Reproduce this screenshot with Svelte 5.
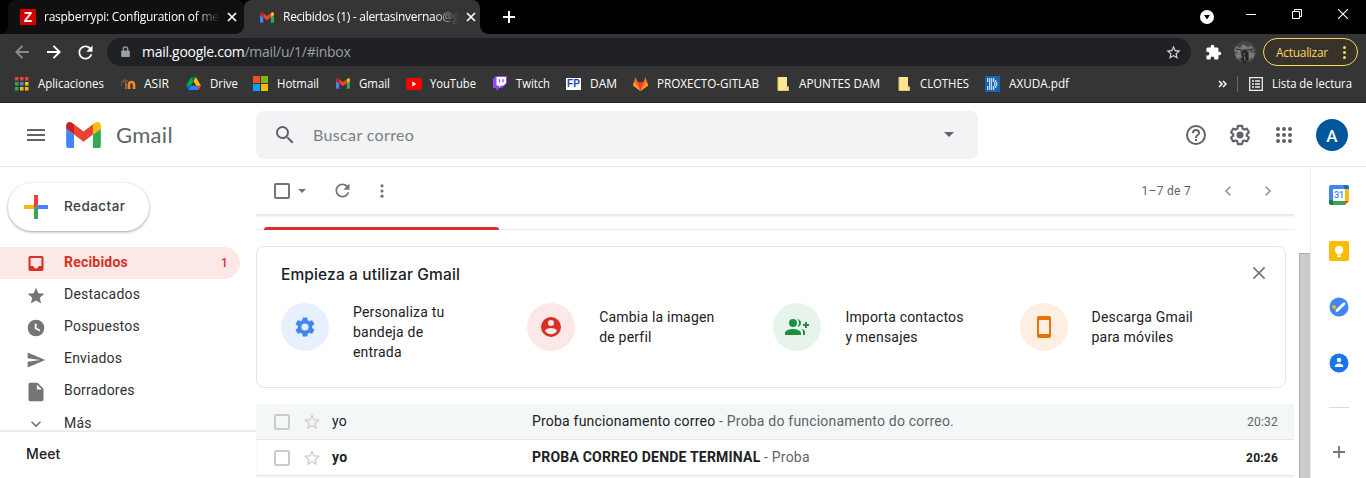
<script>
  const bookmarks = [
    { icon: 'apps', label: 'Aplicaciones', width: 106, text: 66 },
    { icon: 'moodle', label: 'ASIR', width: 66, text: 25 },
    { icon: 'drive', label: 'Drive', width: 67, text: 28 },
    { icon: 'ms', label: 'Hotmail', width: 82, text: 42 },
    { icon: 'gmail', label: 'Gmail', width: 71, text: 31 },
    { icon: 'youtube', label: 'YouTube', width: 86, text: 46 },
    { icon: 'twitch', label: 'Twitch', width: 74, text: 34 },
    { icon: 'fp', label: 'DAM', width: 67, text: 27 },
    { icon: 'gitlab', label: 'PROXECTO-GITLAB', width: 142, text: 102 },
    { icon: 'folder', label: 'APUNTES DAM', width: 121, text: 81 },
    { icon: 'folder', label: 'CLOTHES', width: 89, text: 49 },
    { icon: 'pdf', label: 'AXUDA.pdf', width: 110, text: 60 }
  ];
  const folders = [
    { label: 'Recibidos', count: '1', icon: 'M19 3H5c-1.1 0-2 .9-2 2v14c0 1.1.9 2 2 2h14c1.1 0 2-.9 2-2V5c0-1.1-.9-2-2-2zm-.5 12H15c0 1.660-1.350 3-3 3s-3-1.340-3-3H5.500V5.500h13v9.500z' },
    { label: 'Destacados', icon: 'M12 17.27L18.18 21l-1.64-7.03L22 9.24l-7.19-.61L12 2 9.19 8.63 2 9.24l5.46 4.73L5.82 21z' },
    { label: 'Pospuestos', icon: 'M12 2a10 10 0 1 0 0 20 10 10 0 0 0 0-20zm4.2 14.2L10.500 13V7h2.200v4.800l4.500 2.700z' },
    { label: 'Enviados', icon: 'M2 21l21-9L2 3v7l15 2-15 2z' },
    { label: 'Borradores', icon: 'M14 1H5c-1.1 0-2 .9-2 2v18c0 1.1.9 2 2 2h14c1.1 0 2-.9 2-2V8l-7-7zm-1 8V3l6 6z' }
  ];
  const gear = 'M19.14 12.94c.04-.3.06-.61.06-.94 0-.32-.02-.64-.07-.94l2.03-1.58c.18-.14.23-.41.12-.61l-1.92-3.32c-.12-.22-.37-.29-.59-.22l-2.39.96c-.5-.38-1.03-.7-1.62-.94l-.36-2.54c-.04-.24-.24-.41-.48-.41h-3.84c-.24 0-.43.17-.47.41l-.36 2.54c-.59.24-1.13.57-1.62.94l-2.39-.96c-.22-.08-.47 0-.59.22L2.74 8.87c-.12.21-.08.47.12.61l2.03 1.58c-.05.3-.09.63-.09.94s.02.64.07.94l-2.03 1.58c-.18.14-.23.41-.12.61l1.92 3.32c.12.22.37.29.59.22l2.39-.96c.5.38 1.03.7 1.62.94l.36 2.54c.05.24.24.41.48.41h3.84c.24 0 .44-.17.47-.41l.36-2.54c.59-.24 1.13-.56 1.62-.94l2.39.96c.22.08.47 0 .59-.22l1.92-3.32c.12-.22.07-.47-.12-.61z';
  const tips = [
    { color: '#4285f4', bg: '#e8f0fe', lines: ['Personaliza tu', 'bandeja de', 'entrada'], icon: gear + 'M12 8.4a3.6 3.6 0 1 0 0 7.2 3.6 3.6 0 0 0 0-7.2z' },
    { color: '#d93025', bg: '#fce8e6', lines: ['Cambia la imagen', 'de perfil'], icon: 'M12 2a10 10 0 1 0 0 20 10 10 0 0 0 0-20zm0 3a3 3 0 1 1 0 6 3 3 0 0 1 0-6zm0 14.2c-2.500 0-4.710-1.280-6-3.220.03-1.990 4-3.080 6-3.080s5.970 1.090 6 3.080c-1.290 1.940-3.500 3.220-6 3.220z' },
    { color: '#1e8e3e', bg: '#e6f4ea', lines: ['Importa contactos', 'y mensajes'], icon: 'M8 4a4 4 0 1 0 0 8 4 4 0 0 0 0-8zM0 20v-2c0-2.660 5.330-4 8-4s8 1.340 8 4v2zM12.500 4.050C13.430 5.110 14 6.490 14 8s-.57 2.890-1.500 3.950c2-.24 3.500-1.900 3.500-3.950s-1.500-3.710-3.500-3.950zM16.530 13.830C17.420 14.660 18 15.700 18 17v3h2v-3c0-1.450-1.590-2.510-3.470-3.170zM20 7h2v2h2v2h-2v2h-2v-2h-2V9h2z' },
    { color: '#e8710a', bg: '#feefe3', lines: ['Descarga Gmail', 'para móviles'], icon: 'M17 1H7c-1.100 0-2 .9-2 2v18c0 1.100.9 2 2 2h10c1.100 0 2-.9 2-2V3c0-1.100-.9-2-2-2zm0 18H7V5h10v14z' }
  ];
  const mails = [
    { from: 'yo', subject: 'Proba funcionamento correo', body: 'Proba do funcionamento do correo.', time: '20:32', read: true },
    { from: 'yo', subject: 'PROBA CORREO DENDE TERMINAL', body: 'Proba', time: '20:26', read: false }
  ];
  const appColors = ['#ea4335', '#ea4335', '#ea4335', '#34a853', '#4285f4', '#fbbc04', '#34a853', '#fbbc04', '#fbbc04'];
  const starPath = 'M22 9.24l-7.190-.62L12 2 9.190 8.630 2 9.240l5.460 4.730L5.820 21 12 17.270 18.180 21l-1.630-7.030L22 9.240zM12 15.400l-3.760 2.270 1-4.280-3.320-2.880 4.380-.38L12 6.100l1.710 4.040 4.380.38-3.320 2.880 1 4.280L12 15.400z';
  const refreshPath = 'M17.650 6.350C16.200 4.900 14.210 4 12 4c-4.420 0-7.990 3.580-7.990 8s3.570 8 7.990 8c3.730 0 6.840-2.550 7.730-6h-2.080c-.82 2.330-3.040 4-5.650 4-3.310 0-6-2.690-6-6s2.690-6 6-6c1.660 0 3.140.69 4.220 1.780L13 11h7V4l-2.350 2.350z';
</script>

{#snippet ico(d, size, color)}
  <svg width={size} height={size} viewBox="0 0 24 24" fill={color}><path {d} fill-rule="evenodd" /></svg>
{/snippet}

{#snippet gmail(w, h)}
  <svg width={w} height={h} viewBox="52 42 88 66">
    <path fill="#4285f4" d="M58 108h14V74L52 59v43c0 3.320 2.690 6 6 6" />
    <path fill="#34a853" d="M120 108h14c3.320 0 6-2.690 6-6V59l-20 15" />
    <path fill="#fbbc04" d="M120 48v26l20-15v-8c0-7.420-8.470-11.650-14.400-7.200" />
    <path fill="#ea4335" d="M72 74V48l24 18 24-18v26L96 92" />
    <path fill="#c5221f" d="M52 51v8l20 15V48l-5.600-4.200c-5.940-4.450-14.400-.22-14.400 7.200" />
  </svg>
{/snippet}

{#snippet cross(size, color, w)}
  <svg width={size} height={size} viewBox="0 0 10 10" fill="none" stroke={color} stroke-width={w}><path d="M1 1l8 8M9 1l-8 8" /></svg>
{/snippet}

<div class="page">
  <div class="tabs">
    <div class="tab first">
      <span class="zicon">Z</span>
      <span class="title t1">raspberrypi: Configuration of med</span>
      {@render cross(10, '#fff', 1.7)}
    </div>
    <div class="tab active">
      <span class="gicon">{@render gmail(14, 11)}</span>
      <span class="title t2">Recibidos (1) - alertasinvernao@g</span>
      {@render cross(10, '#fff', 1.7)}
    </div>
    <svg class="newtab" width="12" height="12" viewBox="0 0 12 12" stroke="#fff" stroke-width="2"><path d="M6 0v12M0 6h12" /></svg>
    <div class="window">
      <svg width="14" height="14" viewBox="0 0 14 14"><circle cx="7" cy="7" r="7" fill="#fff" /><path d="M4 5h6L7 9.500z" fill="#000" /></svg>
      <svg width="10" height="10" viewBox="0 0 10 10"><path d="M0 5.500h10" stroke="#fff" /></svg>
      <svg width="10" height="10" viewBox="0 0 10 10" fill="none" stroke="#fff"><path d="M.5 2.500h7v7h-7zM2.500 2.500v-2h7v7h-2" /></svg>
      <svg width="10" height="10" viewBox="0 0 10 10" stroke="#fff" stroke-width="1.100"><path d="M0 0l10 10M10 0L0 10" /></svg>
    </div>
  </div>

  <div class="navbar">
    <svg class="back" width="14" height="14" viewBox="0 0 14 14" fill="none" stroke="#8b8b8b" stroke-width="1.900"><path d="M14 7H1.500M7.500 .8L1.300 7l6.200 6.200" /></svg>
    <svg class="fwd" width="14" height="14" viewBox="0 0 14 14" fill="none" stroke="#fff" stroke-width="1.900"><path d="M0 7h12.500M6.500 .8L12.700 7l-6.200 6.200" /></svg>
    <span class="reload">{@render ico(refreshPath, 21, '#fff')}</span>
    <div class="url">
      <svg width="9" height="12" viewBox="0 0 9 12"><path d="M1 4.500h7q.8 0 .8.800v5q0 .8-.8.800H1q-.8 0-.8-.8v-5q0-.8.8-.8z" fill="#9aa0a6" /><path d="M2.300 5V3a2.200 2.200 0 0 1 4.400 0v2" fill="none" stroke="#9aa0a6" stroke-width="1.200" /></svg>
      <span class="addr"><b>mail.google.com</b>/mail/u/1/#inbox</span>
      {@render ico(starPath, 17, '#d5d7da')}
    </div>
    <span class="ext">{@render ico('M20.500 11H19V7c0-1.100-.9-2-2-2h-4V3.500a2.500 2.500 0 0 0-5 0V5H4c-1.100 0-2 .9-2 2v3.800h1.500a2.700 2.700 0 0 1 0 5.400H2V20c0 1.100.9 2 2 2h3.800v-1.500a2.700 2.700 0 0 1 5.400 0V22H17c1.100 0 2-.9 2-2v-4h1.500a2.500 2.500 0 0 0 0-5z', 17, '#fff')}</span>
    <svg class="photo" width="22" height="22" viewBox="0 0 22 22">
      <circle cx="11" cy="11" r="11" fill="#474747" />
      <path d="M2 5l4 2 3-4 4 3 5-1 2 5-4-1-3 2-5-2-4 3-4-2zM1 13l5-2 1 6-4 1zM16 11l5 1-2 6-4-2z" fill="#777" />
      <path d="M8 10l3-2 3 3v8l-2 3H9l-2-5z" fill="#262626" /><path d="M10 12l1 8M5 9l3 8M15 8l1 11M9 5l4 2" stroke="#8a8a8a" fill="none" stroke-width=".8" /><path d="M2 8l6 1M12 9l7-1M8 14l6 2" stroke="#292929" />
    </svg>
    <div class="update"><span>Actualizar</span><svg width="3" height="13" viewBox="0 0 3 13" fill="#fdd663"><circle cx="1.500" cy="1.600" r="1.500" /><circle cx="1.500" cy="6.500" r="1.500" /><circle cx="1.500" cy="11.400" r="1.500" /></svg></div>
  </div>

  <div class="bookmarks">
    {#each bookmarks as b}
      <div class="bm" style="width: {b.width}px">
        <span class="bicon">
          {#if b.icon === 'apps'}
            <svg width="14" height="14" viewBox="0 0 14 14">{#each appColors as c, i}<rect x={(i % 3) * 5} y={Math.floor(i / 3) * 5} width="3.500" height="3.500" fill={c} />{/each}</svg>
          {:else if b.icon === 'moodle'}
            <svg width="16" height="12" viewBox="0 0 16 12" fill="none"><path d="M9 11V6.500q0-2.500 2.500-2.500T14 6.500V11" stroke="#f08a2c" stroke-width="2.600" /><path d="M6 11V5" stroke="#a8642e" stroke-width="2" /><path d="M0 4l5-3 4 2-4 2z" fill="#6a5546" /><path d="M1.500 4v5" stroke="#5b514a" /></svg>
          {:else if b.icon === 'drive'}
            <svg width="15" height="13" viewBox="0 0 87.300 78"><path d="M6.600 66.850l3.850 6.650c.8 1.400 1.950 2.500 3.300 3.300l13.750-23.800H0c0 1.550.4 3.100 1.200 4.500z" fill="#0066da" /><path d="M43.650 25L29.900 1.200c-1.350.8-2.500 1.900-3.300 3.300L1.200 48.500A9 9 0 0 0 0 53h27.500z" fill="#00ac47" /><path d="M73.550 76.800c1.350-.8 2.500-1.900 3.300-3.300l9.250-16c.8-1.400 1.200-2.950 1.200-4.500H59.800l5.850 11.500z" fill="#ea4335" /><path d="M43.650 25L57.400 1.200C56.050.4 54.500 0 52.900 0H34.400c-1.600 0-3.150.45-4.500 1.200z" fill="#00832d" /><path d="M59.800 53H27.500L13.750 76.800c1.350.8 2.900 1.200 4.500 1.200h50.800c1.600 0 3.150-.45 4.500-1.200z" fill="#2684fc" /><path d="M73.400 26.500L60.700 4.500c-.8-1.400-1.950-2.500-3.300-3.300L43.650 25 59.800 53h27.450c0-1.550-.4-3.100-1.200-4.500z" fill="#ffba00" /></svg>
          {:else if b.icon === 'ms'}
            <svg width="15" height="15" viewBox="0 0 15 15"><path d="M0 0h7v7H0z" fill="#f25022" /><path d="M8 0h7v7H8z" fill="#7fba00" /><path d="M0 8h7v7H0z" fill="#00a4ef" /><path d="M8 8h7v7H8z" fill="#ffb900" /></svg>
          {:else if b.icon === 'gmail'}
            {@render gmail(14, 11)}
          {:else if b.icon === 'youtube'}
            <svg width="16" height="12" viewBox="0 0 16 12"><rect width="16" height="12" rx="3" fill="#f00" /><path d="M6.300 3.500v5l4.200-2.500z" fill="#fff" /></svg>
          {:else if b.icon === 'twitch'}
            <svg width="14" height="15" viewBox="0 0 14 15"><path d="M3 0L0 3v9h3.500v3l3-3H9l5-5V0z" fill="#9146ff" /><path d="M3.500 1h9.500v6l-2.500 2.500H8L6 11.500v-2H3.500z" fill="#fff" /><path d="M6.500 3.200v3M10 3.200v3" stroke="#9146ff" stroke-width="1.300" /></svg>
          {:else if b.icon === 'fp'}
            <span class="fp">FP</span>
          {:else if b.icon === 'gitlab'}
            <svg width="15" height="14" viewBox="0 0 15 14"><path d="M7.500 14L0 8.500 2.500 0l2.300 5.500h5.400L12.500 0 15 8.500z" fill="#fc6d26" /><path d="M7.500 14L4.800 5.500h5.400z" fill="#e24329" /><path d="M0 8.500l1-3.500 6.500 9zM15 8.500L14 5l-6.500 9z" fill="#fca326" /></svg>
          {:else if b.icon === 'folder'}
            <svg width="12" height="14" viewBox="0 0 12 14"><path d="M1 0h9v9l1.500 1v3.500H1z" fill="#ffe694" /><path d="M1 0v13.500h10.500V10H10v2.500" fill="none" stroke="#e8c95f" /></svg>
          {:else}
            <svg width="15" height="16" viewBox="0 0 15 16"><rect width="15" height="16" fill="#1565b5" /><path d="M2 3h8M2 5h10M4 7h3M9 7h4M4 9h3M9 9h4M2 11h10M2 13h8" stroke="#fff" stroke-width="1.300" stroke-dasharray="1.300 .7" /></svg>
          {/if}
        </span>
        <svg class="bl" width={b.text} height="16"><text x="0" y="12" textLength={b.text} lengthAdjust="spacingAndGlyphs">{b.label}</text></svg>
      </div>
    {/each}
    <svg class="more" width="9" height="8" viewBox="0 0 9 8" fill="none" stroke="#fff" stroke-width="1.500"><path d="M1 1l3 3-3 3M5 1l3 3-3 3" /></svg>
    <span class="bar"></span>
    <svg class="list" width="14" height="14" viewBox="0 0 14 14" fill="none" stroke="#eee" stroke-width="1.300"><path d="M.7.700h12.600v12.600H.7z" /><path d="M3 4h2M6 4h5M3 7h2M6 7h5M3 10h2M6 10h5" stroke-width="1.600" /></svg>
    <svg class="bl" width="80" height="16"><text x="0" y="12" textLength="80" lengthAdjust="spacingAndGlyphs">Lista de lectura</text></svg>
  </div>

  <header>
    <svg class="menu" width="18" height="12" viewBox="0 0 18 12" fill="#5f6368"><path d="M0 0h18v2H0zM0 5h18v2H0zM0 10h18v2H0z" /></svg>
    {@render gmail(35, 26)}
    <span class="brand">Gmail</span>
    <div class="search">
      {@render ico('M15.500 14h-.79l-.28-.27A6.470 6.470 0 0 0 16 9.500 6.500 6.500 0 1 0 9.500 16c1.610 0 3.090-.59 4.230-1.570l.27.28v.79l5 4.990L20.490 19zm-6 0a4.500 4.500 0 1 1 0-9 4.500 4.500 0 0 1 0 9z', 24, '#5f6368')}
      <span>Buscar correo</span>
      <svg width="10" height="5" viewBox="0 0 10 5"><path d="M0 0h10L5 5z" fill="#5f6368" /></svg>
    </div>
    <div class="actions">
      {@render ico('M11 18h2v-2h-2v2zm1-16a10 10 0 1 0 0 20 10 10 0 0 0 0-20zm0 18a8 8 0 1 1 0-16 8 8 0 0 1 0 16zm0-14a4 4 0 0 0-4 4h2a2 2 0 1 1 4 0c0 2-3 1.750-3 5h2c0-2.250 3-2.500 3-5a4 4 0 0 0-4-4z', 24, '#5f6368')}
      <svg width="24" height="24" viewBox="0 0 24 24"><g fill="none" stroke="#5f6368" stroke-width="2.200" transform="translate(.6 .6) scale(.95)"><path d={gear} /></g><circle cx="12" cy="12" r="3.500" fill="#5f6368" /></svg>
      <svg width="16" height="16" viewBox="0 0 16 16" fill="#5f6368">{#each Array(9) as _, i}<circle cx={2 + (i % 3) * 6} cy={2 + Math.floor(i / 3) * 6} r="2" />{/each}</svg>
      <span class="avatar">A</span>
    </div>
  </header>

  <div class="content">
    <aside>
      <nav>
        <button class="compose">
          <svg width="24" height="24" viewBox="0 0 24 24"><path d="M10 0h4v10l-4 4z" fill="#ea4335" /><path d="M10 14h4v10h-4z" fill="#34a853" /><path d="M0 10h10v4H0z" fill="#fbbc04" /><path d="M14 10h10v4H10z" fill="#4285f4" /></svg>
          <span>Redactar</span>
        </button>
        {#each folders as f, i}
          <div class="folder" class:sel={i === 0}>
            {@render ico(f.icon, i === 0 ? 21 : 20, i === 0 ? '#d93025' : '#757575')}
            <span>{f.label}</span>
            {#if f.count}<em>{f.count}</em>{/if}
          </div>
        {/each}
        <div class="folder last">{@render ico('M7.410 8.590L12 13.170l4.590-4.580L18 10l-6 6-6-6z', 20, '#757575')}<span>Más</span></div>
      </nav>
      <div class="meet">Meet</div>
    </aside>

    <main>
      <div class="tools">
        <span class="box"></span>
        <svg class="caret" width="8" height="4" viewBox="0 0 8 4"><path d="M0 0h8L4 4z" fill="#757575" /></svg>
        <span class="rf">{@render ico(refreshPath, 21, '#757575')}</span>
        <svg class="dots" width="4" height="14" viewBox="0 0 4 14" fill="#757575"><circle cx="2" cy="1.800" r="1.600" /><circle cx="2" cy="7" r="1.600" /><circle cx="2" cy="12.200" r="1.600" /></svg>
        <span class="pager">1–7 de 7</span>
        <svg width="6" height="10" viewBox="0 0 6 10" fill="none" stroke="#9b9b9b" stroke-width="1.700"><path d="M5.400.600L1 5l4.400 4.400" /></svg>
        <svg class="next" width="6" height="10" viewBox="0 0 6 10" fill="none" stroke="#9b9b9b" stroke-width="1.700"><path d="M.6.600L5 5 .6 9.400" /></svg>
      </div>
      <div class="inboxtabs"><span></span></div>
      <section class="card">
        <div class="cardhead"><h2>Empieza a utilizar Gmail</h2>{@render cross(14, '#757575', 1.2)}</div>
        <div class="tips">
          {#each tips as t}
            <div class="tip">
              <span class="circle" style="background: {t.bg}">{@render ico(t.icon, 24, t.color)}</span>
              <p class:three={t.lines.length === 3}>{#each t.lines as l}<span>{l}</span>{/each}</p>
            </div>
          {/each}
        </div>
      </section>
      {#each mails as m}
        <div class="mail" class:read={m.read}>
          <span class="box"></span>
          {@render ico(starPath, 20, '#d0d2d2')}
          <span class="from">{m.from}</span>
          <span class="subj"><b>{m.subject}</b> - {m.body}</span>
          <time>{m.time}</time>
        </div>
      {/each}
      <div class="mail read"></div>
    </main>

    <div class="scroll"><span></span></div>
    <div class="panel">
      <svg width="20" height="20" viewBox="0 0 20 20"><path d="M2 0h13v5H5v10H0V2q0-2 2-2z" fill="#4285f4" /><path d="M15 0h3q2 0 2 2v3h-5z" fill="#1967d2" /><path d="M16 4h4v12h-4z" fill="#fbbc04" /><path d="M4 16h12v4H4z" fill="#34a853" /><path d="M0 15h4v5H2q-2 0-2-2z" fill="#188038" /><path d="M16 16h4l-4 4z" fill="#ea4335" /><path d="M4 4h12v12H4z" fill="#fff" /><text x="10" y="13.200" text-anchor="middle" font-family="Roboto" font-size="9" font-weight="500" fill="#4285f4">31</text></svg>
      <svg width="20" height="20" viewBox="0 0 20 20"><rect width="20" height="20" rx="2" fill="#fbbc04" /><circle cx="10" cy="9" r="4.200" fill="#fff" /><path d="M8 11h4v2.500H8zM8 14.500h4V16H8z" fill="#fff" /></svg>
      <svg width="20" height="20" viewBox="0 0 20 20"><circle cx="10" cy="10" r="9.500" fill="#4285f4" /><path d="M8 13.500l7-6.800" stroke="#fff" stroke-width="2.900" stroke-linecap="round" /><circle cx="5" cy="10" r="2" fill="#fbbc04" /></svg>
      <svg width="20" height="20" viewBox="0 0 20 20"><circle cx="10" cy="10" r="9.500" fill="#1a73e8" /><circle cx="10" cy="7" r="2.200" fill="#fff" /><path d="M5.800 14v-.8c0-1.800 2.700-2.700 4.200-2.700s4.200.9 4.200 2.700v.8z" fill="#fff" /></svg>
      <span class="rule"></span>
      <svg width="12" height="12" viewBox="0 0 12 12" stroke="#757575" stroke-width="1.800"><path d="M6 0v12M0 6h12" /></svg>
    </div>
  </div>
</div>

<style>
  .page { width: 1366px; height: 478px; overflow: hidden; display: flex; flex-direction: column; background: #fff; font-family: Roboto, sans-serif; color: #202124; }
  .page * { box-sizing: border-box; }
  svg { display: block; flex: none; }
  .tabs { height: 34px; background: #000; display: flex; align-items: center; padding-left: 8px; flex: none; font: 12px "Open Sans", sans-serif; color: #fff; }
  .tab { position: relative; width: 236px; height: 34px; display: flex; align-items: center; padding-left: 12px; background: #101010; border-radius: 8px 8px 0 0; flex: none; }
  .tab::before, .tab::after { content: ""; position: absolute; bottom: 0; left: -8px; width: 8px; height: 8px; background: radial-gradient(circle at 0 0, transparent 7.500px, #101010 8px); }
  .tab::after { left: auto; right: -8px; background: radial-gradient(circle at 100% 0, transparent 7.500px, #353535 8px); }
  .first::after { display: none; }
  .active { background: #353535; padding-left: 15px; }
  .active::before { background: radial-gradient(circle at 0 0, #101010 7.500px, #353535 8px); }
  .zicon { width: 16px; height: 16px; background: #d40000; font: bold 14px/16px "Liberation Sans", sans-serif; text-align: center; }
  .gicon { width: 16px; display: flex; justify-content: center; }
  .title { width: 175px; margin-left: 8px; margin-right: 8px; padding-bottom: 1px; white-space: nowrap; mask-image: linear-gradient(90deg, #000 150px, transparent 176px); }
  .t1 { letter-spacing: -.26px; }
  .t2 { letter-spacing: -.28px; }
  .newtab { margin-left: 23px; flex: none; }
  .window { margin-left: auto; display: flex; width: 166px; gap: 36px; align-items: center; padding-bottom: 6px; }
  .window svg:first-child { margin-top: 6px; margin-right: -4px; }
  .navbar { height: 36px; flex: none; background: #353535; display: flex; align-items: center; padding-left: 15px; }
  .fwd { margin-left: 18px; }
  .reload { margin-left: 14px; width: 32px; }
  .url { width: 1084px; height: 28px; border-radius: 14px; background: #202124; display: flex; align-items: center; padding: 0 9px 0 14px; flex: none; }
  .addr { flex: 1; margin-left: 12px; padding-bottom: 1px; color: #9aa0a6; font: 14px "Open Sans", sans-serif; letter-spacing: -.28px; }
  .addr b { font-weight: 400; color: #fff; }
  .ext { margin-left: 14px; }
  .photo { margin-left: 12px; }
  .update { margin-left: 7px; width: 95px; height: 28px; border: 1px solid #fdd663; border-radius: 14px; background: #37332a; display: flex; align-items: center; justify-content: space-between; padding: 0 11px 0 12px; color: #fdd663; font: 12px "Open Sans", sans-serif; letter-spacing: -.3px; }
  .bookmarks { height: 33px; border-bottom: 1px solid #202020; background: #353535; flex: none; display: flex; align-items: center; padding-left: 13px; padding-bottom: 5px; }
  .bm { display: flex; align-items: center; flex: none; }
  .bicon { width: 17px; margin-right: 8px; height: 16px; display: flex; align-items: center; justify-content: center; }
  .bl text { font: 12px "Open Sans", sans-serif; fill: #fff; }
  .bl { overflow: visible; }
  .fp { width: 15px; height: 12px; background: #fff; color: #1951b5; font: bold 10px/12px "Liberation Sans", sans-serif; text-align: center; }
  .more { margin-left: auto; margin-right: 10px; }
  .bar { width: 1px; height: 16px; background: #686868; }
  .list { margin: 0 9px 0 11px; }
  .list + .bl { margin-right: 14px; }
  header { height: 64px; flex: none; border-bottom: 1px solid #e8eaed; display: flex; align-items: center; }
  .menu { margin: 0 21px 0 27px; }
  .brand { margin-left: 15px; width: 140px; font: 22px Lato, sans-serif; color: #5f6368; letter-spacing: .3px; }
  .search { width: 722px; height: 48px; border-radius: 8px; background: #f1f3f4; display: flex; align-items: center; padding: 0 24px 0 17px; flex: none; }
  .search span { flex: 1; margin-left: 16px; font: 16px Lato, sans-serif; color: #7a7e82; letter-spacing: .36px; }
  .actions { display: flex; align-items: center; margin-left: 206px; gap: 20px; }
  .actions svg:nth-child(3) { margin: 0 4px; }
  .avatar { width: 32px; height: 32px; border-radius: 16px; background: #01579b; color: #fff; text-align: center; font: 500 17px/34px Roboto, sans-serif; }
  .content { flex: 1; display: flex; min-height: 0; }
  aside { width: 256px; flex: none; }
  nav { height: 264px; overflow: hidden; padding-top: 16px; }
  .compose { width: 141px; height: 48px; border: 0; border-radius: 24px; margin: 0 0 16px 8px; padding: 0 0 0 16px; background: #fff; box-shadow: 0 1px 2px rgba(60,64,67,.302), 0 1px 3px 1px rgba(60,64,67,.149); display: flex; align-items: center; font: 500 13.500px Inter, sans-serif; letter-spacing: .45px; color: #3c4043; }
  .compose span { margin-left: 16px; padding-bottom: 2px; }
  .folder { width: 240px; height: 32px; padding: 0 12px 0 26px; display: flex; align-items: center; font-size: 14px; letter-spacing: .2px; color: #303134; }
  .folder :global(svg) { width: 20px; margin-top: 1px; }
  .folder span { margin-left: 18px; flex: 1; margin-top: -2px; }
  .folder em { font: 500 12px Roboto, sans-serif; }
  .sel { background: #fce8e6; color: #d93025; border-radius: 0 16px 16px 0; font-weight: 700; }
  .last { padding-top: 1px; }
  .meet { height: 47px; padding: 12px 26px; border-top: 1px solid #e9e9e9; box-shadow: 0 -1px 2px rgba(0,0,0,.08); font: 500 14px/20px Inter, sans-serif; letter-spacing: .1px; }
  main { width: 1038px; flex: none; overflow: hidden; }
  .tools { height: 48px; display: flex; align-items: center; padding: 0 23px 0 18px; border-bottom: 1px solid #e6e6e6; box-shadow: 0 1px 2px rgba(0,0,0,.1); }
  .box { width: 16px; height: 16px; border: 2px solid #757575; border-radius: 2px; flex: none; }
  .caret { margin-left: 8px; }
  .rf { margin-left: 26px; }
  .dots { margin-left: 27px; }
  .pager { margin-left: auto; margin-right: 34px; font-size: 12px; color: #5f6368; letter-spacing: .3px; }
  .next { margin-left: 34px; }
  .inboxtabs { height: 15px; border-bottom: 1px solid #ececec; padding-left: 8px; display: flex; align-items: flex-end; }
  .inboxtabs span { width: 235px; height: 3px; margin-bottom: -1px; border-radius: 3px 3px 0 0; background: #d93025; }
  .card { width: 1030px; height: 142px; margin: 16px 0; border: 1px solid #e3e5e8; border-radius: 8px; padding: 16px 19px 0 24px; }
  .cardhead { display: flex; justify-content: space-between; align-items: center; height: 20px; }
  h2 { margin: 0; padding-top: 2px; font: 500 15.500px Inter, sans-serif; letter-spacing: .13px; }
  .tips { display: grid; grid-template-columns: repeat(4, 246.200px); margin-top: 19px; }
  .tip { display: flex; align-items: flex-start; }
  .circle { width: 48px; height: 48px; border-radius: 24px; display: flex; align-items: center; justify-content: center; margin-top: 1px; }
  p { margin: 5px 0 0 24px; font-size: 14px; line-height: 20px; letter-spacing: .2px; }
  p.three { margin-top: 0; }
  p span { display: block; }
  .mail { height: 36px; display: flex; align-items: center; padding: 0 16px 0 18px; border-bottom: 1px solid #e3e7e7; font-size: 14px; letter-spacing: .2px; }
  .mail .box { border-color: #cacccc; }
  .mail :global(svg) { margin: 0 10px 0 12px; }
  .from, .subj { padding-bottom: 2px; }
  .from { width: 200px; font-weight: 700; }
  .subj { flex: 1; color: #5f6368; }
  .subj b { color: #202124; font-weight: 700; letter-spacing: .2px; }
  time { font-size: 12px; font-weight: 700; }
  .read { background: #f4f7f7; }
  .read .from, .read .subj b { font-weight: 400; }
  .read time { font-weight: 400; color: #5f6368; }
  .scroll { width: 16px; padding: 86px 0 0 5px; flex: none; }
  .scroll span { display: block; height: 230px; background: #cbcbcb; border: 1px solid #adadad; border-right: 0; }
  .panel { width: 56px; flex: none; border-left: 1px solid #ebedef; padding-top: 18px; display: flex; flex-direction: column; align-items: center; gap: 36px; padding-left: 1px; }
  .rule { width: 20px; height: 1px; background: #dadce0; margin: -2px 0 2px; }
</style>
